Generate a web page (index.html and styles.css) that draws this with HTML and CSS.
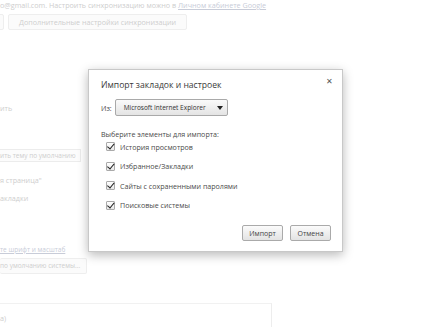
FILE: index.html
```html
<!DOCTYPE html>
<html lang="ru">
<head>
  <meta charset="UTF-8">
  <title>Настройки</title>
  <link rel="stylesheet" href="styles.css">
</head>
<body>
  <div class="page">
    <div class="line first">o@gmail.com. Настроить синхронизацию можно в <a href="#">Личном кабинете Google</a></div>
    <div class="row-buttons">
      <span class="btn-bg stub"></span>
      <span class="btn-bg">Дополнительные настройки синхронизации</span>
    </div>

    <div class="line l-theme">ить</div>
    <div class="field-bg">ить тему по умолчанию</div>
    <div class="line l-home">я страница"</div>
    <div class="line l-bookmarks">акладки</div>

    <div class="line l-link"><a href="#">те шрифт и масштаб</a></div>
    <div class="btn-bg wide">по умолчанию системы...</div>

    <div class="bottom-box">
      <div class="line">а)</div>
    </div>
  </div>

  <div class="dialog">
    <div class="dialog-head">
      <span class="dialog-title">Импорт закладок и настроек</span>
      <span class="close">&#x2715;</span>
    </div>

    <div class="from-row">
      <span>Из:</span>
      <div class="select">
        <span>Microsoft Internet Explorer</span>
        <span class="arrow"></span>
      </div>
    </div>

    <div class="choose">Выберите элементы для импорта:</div>

    <ul class="items">
      <li><span class="check"></span>История просмотров</li>
      <li><span class="check"></span>Избранное/Закладки</li>
      <li><span class="check"></span>Сайты с сохраненными паролями</li>
      <li><span class="check"></span>Поисковые системы</li>
    </ul>

    <div class="actions">
      <button>Импорт</button>
      <button>Отмена</button>
    </div>
  </div>
</body>
</html>
```

FILE: styles.css
```css
body {
  margin: 0;
  width: 434px;
  height: 327px;
  overflow: hidden;
  background: #fff;
  font-family: 'Open Sans', 'Noto Sans', sans-serif;
  position: relative;
}

/* faded settings page behind the dialog */
.page {
  color: #cecece;
  font-size: 7.2px;
}

.page a {
  color: #c8ccd8;
}

.line {
  line-height: 11px;
  white-space: nowrap;
}

.row-buttons {
  display: flex;
  gap: 4px;
  margin-top: 3px;
  margin-left: -4px;
}

.btn-bg {
  display: inline-block;
  height: 16px;
  line-height: 14px;
  padding: 0 10px;
  box-sizing: border-box;
  border: 1px solid #eeeeee;
  border-radius: 2px;
  background: #fbfbfb;
  white-space: nowrap;
}

.stub {
  width: 8px;
  padding: 0;
}

.l-theme {
  margin-top: 73px;
}

.field-bg {
  display: inline-block;
  margin-top: 35px;
  height: 13px;
  line-height: 11px;
  padding: 0 4px 0 0;
  box-sizing: border-box;
  border: 1px solid #ececec;
  border-left: none;
  background: #fcfcfc;
  font-size: 6.5px;
  white-space: nowrap;
}

.l-home {
  margin-top: 13px;
}

.l-bookmarks {
  margin-top: 7px;
}

.l-link {
  margin-top: 40px;
  font-size: 6.5px;
}

.wide {
  display: inline-block;
  margin-top: 3px;
  padding: 0 6px 0 0;
  border-left: none;
  font-size: 6.5px;
}

.bottom-box {
  margin-top: 29px;
  width: 272px;
  border-top: 1px solid #f1f1f1;
  border-right: 1px solid #ededed;
  height: 25px;
  padding-top: 9px;
  box-sizing: border-box;
}

/* dialog */
.dialog {
  position: absolute;
  left: 88px;
  top: 69px;
  width: 255px;
  height: 183px;
  box-sizing: border-box;
  background: #fff;
  border: 1px solid #c8c8c8;
  box-shadow: 0 3px 10px rgba(0, 0, 0, 0.28);
  padding: 0 11px 0 12px;
  color: #4a4a4a;
  font-size: 7.1px;
}

.dialog-head {
  display: flex;
  justify-content: space-between;
  align-items: flex-start;
  height: 29px;
}

.dialog-title {
  font-size: 8.6px;
  color: #3a3a3a;
  margin-top: 9px;
}

.close {
  font-size: 8px;
  color: #555;
  margin-top: 5px;
  margin-right: -2px;
}

.from-row {
  display: flex;
  align-items: center;
  gap: 3px;
  height: 17px;
}

.select {
  display: flex;
  align-items: center;
  justify-content: space-between;
  width: 113px;
  height: 17px;
  box-sizing: border-box;
  padding: 0 4px 0 8px;
  border: 1px solid #a9a9a9;
  border-radius: 2px;
  background: linear-gradient(#fafafa, #e4e4e4);
  color: #333;
  font-size: 6.5px;
  white-space: nowrap;
}

.arrow {
  width: 0;
  height: 0;
  border-left: 3.5px solid transparent;
  border-right: 3.5px solid transparent;
  border-top: 4px solid #222;
}

.choose {
  margin-top: 12px;
  line-height: 12px;
}

.items {
  list-style: none;
  margin: -3px 0 0;
  padding: 0 0 0 5px;
}

.items li {
  display: flex;
  align-items: center;
  gap: 5px;
  height: 19.5px;
}

.check {
  position: relative;
  width: 9px;
  height: 9px;
  box-sizing: border-box;
  border: 1px solid #aaa;
  border-radius: 1px;
  background: linear-gradient(#fff, #e8e8e8);
}

.check::after {
  content: "";
  position: absolute;
  left: 2px;
  top: -1px;
  width: 2.5px;
  height: 5.5px;
  border-right: 1.6px solid #222;
  border-bottom: 1.6px solid #222;
  transform: rotate(40deg);
}

.actions {
  display: flex;
  justify-content: flex-end;
  gap: 7px;
  margin-top: 10px;
}

.actions button {
  width: 41px;
  height: 16px;
  padding: 0;
  font-family: inherit;
  font-size: 7px;
  color: #444;
  border: 1px solid #aaa;
  border-radius: 2px;
  background: linear-gradient(#fbfbfb, #e3e3e3);
}
```
